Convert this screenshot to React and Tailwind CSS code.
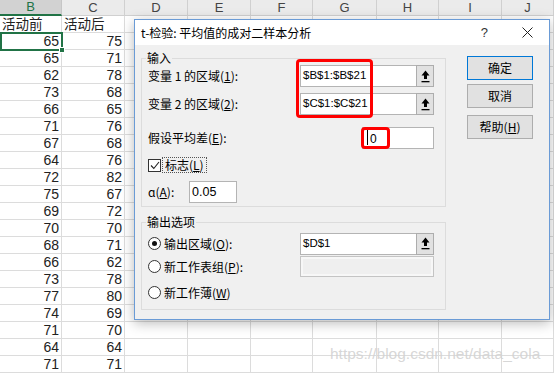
import React from 'react'

const COLS = [
  { key: 'B', w: 'w-[62px]' },
  { key: 'C', w: 'w-[63px]' },
  { key: 'D', w: 'w-[63px]' },
  { key: 'E', w: 'w-[63px]' },
  { key: 'F', w: 'w-[62px]' },
  { key: 'G', w: 'w-[64px]' },
  { key: 'H', w: 'w-[62px]' },
  { key: 'I', w: 'w-[63px]' },
  { key: 'J', w: 'w-[52px]' },
]

const before = [65, 65, 62, 73, 66, 71, 67, 64, 72, 75, 69, 70, 68, 66, 73, 77, 74, 71, 64, 71]
const after = [75, 71, 78, 68, 65, 76, 68, 76, 82, 67, 72, 70, 71, 62, 78, 80, 69, 70, 64, 71]

const rows = [['活动前', '活动后'], ...before.map((b, i) => [b, after[i]])]

const cjk = "font-['Noto_Sans_CJK_SC',sans-serif]"

function Sheet() {
  return (
    <div className="font-['Liberation_Sans','Noto_Sans_CJK_SC',sans-serif]">
      <div className="flex h-[16px]">
        {COLS.map((c, i) => (
          <div
            key={c.key}
            className={
              i === 0
                ? `${c.w} shrink-0 flex items-center justify-center bg-[#d2d2d2] border-r border-[#c6c6c6] border-b-2 border-b-[#217346] text-[13px] text-[#217346]`
                : `${c.w} shrink-0 flex items-center justify-center bg-[#ebebeb] border-r border-[#d0d0d0] border-b border-b-[#d0d0d0] text-[13px] text-[#444]`
            }
          >
            {c.key}
          </div>
        ))}
      </div>
      {rows.map((r, ri) => (
        <div key={ri} className="flex h-[17px]">
          {COLS.map((c, ci) => {
            const v = ci < 2 ? r[ci] : ''
            const isText = typeof v === 'string'
            return (
              <div
                key={c.key}
                className={`${c.w} shrink-0 flex items-center border-r border-b border-[#dcdcdc] text-[#222] leading-none ${
                  isText ? `justify-start pl-[2px] ${cjk} text-[13.5px]` : 'justify-end pr-[2px] text-[14px]'
                }`}
              >
                {v}
              </div>
            )
          })}
        </div>
      ))}
    </div>
  )
}

function ArrowBtn() {
  return (
    <div className="w-[18px] h-full -ml-px border border-[#adadad] bg-[#e1e1e1] flex items-center justify-center">
      <svg width="9" height="13" viewBox="0 0 9 13">
        <polygon points="4.5,0.5 8.5,5.5 6,5.5 6,9 3,9 3,5.5 0.5,5.5" fill="#000" />
        <rect x="0.5" y="11" width="8" height="1.3" fill="#000" />
      </svg>
    </div>
  )
}

function RefField({ value }) {
  return (
    <div className="flex h-[22px] w-[134px]">
      <div className="w-[117px] h-full border border-[#b4b4b4] bg-white flex items-center pl-[2px] text-[11.5px] font-['Liberation_Sans',sans-serif] text-black">
        {value}
      </div>
      <ArrowBtn />
    </div>
  )
}

function Radio({ checked }) {
  return (
    <div className="w-[13px] h-[13px] rounded-full border border-[#333] bg-white flex items-center justify-center shrink-0">
      {checked && <div className="w-[5px] h-[5px] rounded-full bg-[#111]" />}
    </div>
  )
}

function Btn({ children, primary }) {
  return (
    <div
      className={`w-[66px] h-[24px] flex items-center justify-center bg-[#e1e1e1] border text-[12px] text-black ${
        primary ? 'border-[#0078d7]' : 'border-[#adadad]'
      }`}
    >
      {children}
    </div>
  )
}

function Dialog() {
  return (
    <div className={`absolute left-[134px] top-[19px] w-[416px] h-[301px] border border-[#6a9bd6] bg-[#f0f0f0] shadow-[0_3px_12px_rgba(0,0,0,0.28)] ${cjk} text-[12px] text-black`}>
      <div className="h-[25px] bg-white flex items-center pl-[6px] relative">
        <span className="leading-none">t-检验: 平均值的成对二样本分析</span>
        <div className="ml-auto flex items-center">
          <span className="text-[13px] text-[#333] font-['Liberation_Sans',sans-serif] mr-[34px]">?</span>
          <svg width="11" height="11" viewBox="0 0 11 11" className="mr-[16px]">
            <path d="M0.5 0.5 L10.5 10.5 M10.5 0.5 L0.5 10.5" stroke="#222" strokeWidth="1" />
          </svg>
        </div>
      </div>
      <div className="flex pl-[6px] pt-[6px]">
        <div className="w-[305px]">
          <fieldset className="border border-[#dcdcdc] pb-[3px]">
            <legend className="ml-[4px] px-[1px] leading-[14px]">输入</legend>
            <div className="flex items-center justify-between h-[22px] pl-[6px] pr-[11px]">
              <span>变量 1 的区域(<u>1</u>):</span>
              <RefField value="$B$1:$B$21" />
            </div>
            <div className="flex items-center justify-between h-[22px] mt-[6px] pl-[6px] pr-[11px]">
              <span>变量 2 的区域(<u>2</u>):</span>
              <RefField value="$C$1:$C$21" />
            </div>
            <div className="flex items-center justify-between h-[22px] mt-[12px] pl-[6px] pr-[11px]">
              <span>假设平均差(<u>E</u>):</span>
              <div className="w-[72px] h-full border border-[#b4b4b4] bg-white flex items-start pl-[4px] pt-[2px] text-[12px] font-['Liberation_Sans',sans-serif]">
                <div className="w-px h-[15px] bg-black mr-[2px]" />
                0
              </div>
            </div>
            <div className="flex items-center h-[16px] mt-[8px] pl-[6px]">
              <div className="w-[13px] h-[13px] border border-[#333] bg-white flex items-center justify-center">
                <svg width="10" height="9" viewBox="0 0 10 9">
                  <path d="M1 4.5 L3.8 7.5 L9 1" fill="none" stroke="#222" strokeWidth="1.1" />
                </svg>
              </div>
              <div className="ml-[1px] h-[16px] px-[2px] border border-dotted border-[#555] flex items-center">
                标志(<u>L</u>)
              </div>
            </div>
            <div className="flex items-center h-[22px] mt-[8px] pl-[6px]">
              <span className="w-[41px]">ɑ(<u>A</u>):</span>
              <div className="w-[48px] h-full border border-[#b4b4b4] bg-white flex items-center pl-[2px] text-[12.5px] font-['Liberation_Sans',sans-serif]">
                0.05
              </div>
            </div>
          </fieldset>

          <fieldset className="border border-[#dcdcdc] mt-[8px] pb-[6px]">
            <legend className="ml-[4px] px-[1px] leading-[14px]">输出选项</legend>
            <div className="flex items-center justify-between h-[21px] mt-[4px] pl-[6px] pr-[11px]">
              <div className="flex items-center gap-[3px]">
                <Radio checked />
                <span>输出区域(<u>O</u>):</span>
              </div>
              <RefField value="$D$1" />
            </div>
            <div className="flex items-center justify-between h-[21px] mt-[2px] pl-[6px] pr-[11px]">
              <div className="flex items-center gap-[3px]">
                <Radio />
                <span>新工作表组(<u>P</u>):</span>
              </div>
              <div className="w-[134px] h-full border border-[#c4c4c4] bg-[#f7f7f7] p-[2px]">
                <div className="w-full h-full bg-[#efefef]" />
              </div>
            </div>
            <div className="flex items-center h-[21px] mt-[5px] pl-[6px] gap-[3px]">
              <Radio />
              <span>新工作薄(<u>W</u>)</span>
            </div>
          </fieldset>
        </div>

        <div className="ml-[21px] pt-[5px] flex flex-col">
          <Btn primary>确定</Btn>
          <div className="mt-[4px]">
            <Btn>取消</Btn>
          </div>
          <div className="mt-[7px]">
            <Btn>帮助(<u>H</u>)</Btn>
          </div>
        </div>
      </div>
    </div>
  )
}

export default function App() {
  return (
    <div className="relative w-[554px] h-[373px] overflow-hidden bg-white">
      <Sheet />
      {/* selected cell B2 */}
      <div className="absolute left-0 top-[32px] w-[63px] h-[19px] border-2 border-[#217346]" />
      <div className="absolute left-[59px] top-[47px] w-[6px] h-[6px] bg-[#217346] border border-white" />

      <Dialog />

      {/* red annotation boxes */}
      <div className="absolute left-[296px] top-[59px] w-[77px] h-[59px] border-[3px] border-[#f00] rounded-[4px]" />
      <div className="absolute left-[361px] top-[127px] w-[29px] h-[22px] border-[3px] border-[#f00] rounded-[4px]" />

      <div className="absolute left-[330px] top-[345px] text-[15.5px] leading-[18px] text-[#d2d2d2]/90 font-['Liberation_Sans',sans-serif]">
        https://blog.csdn.net/data_cola
      </div>
    </div>
  )
}
